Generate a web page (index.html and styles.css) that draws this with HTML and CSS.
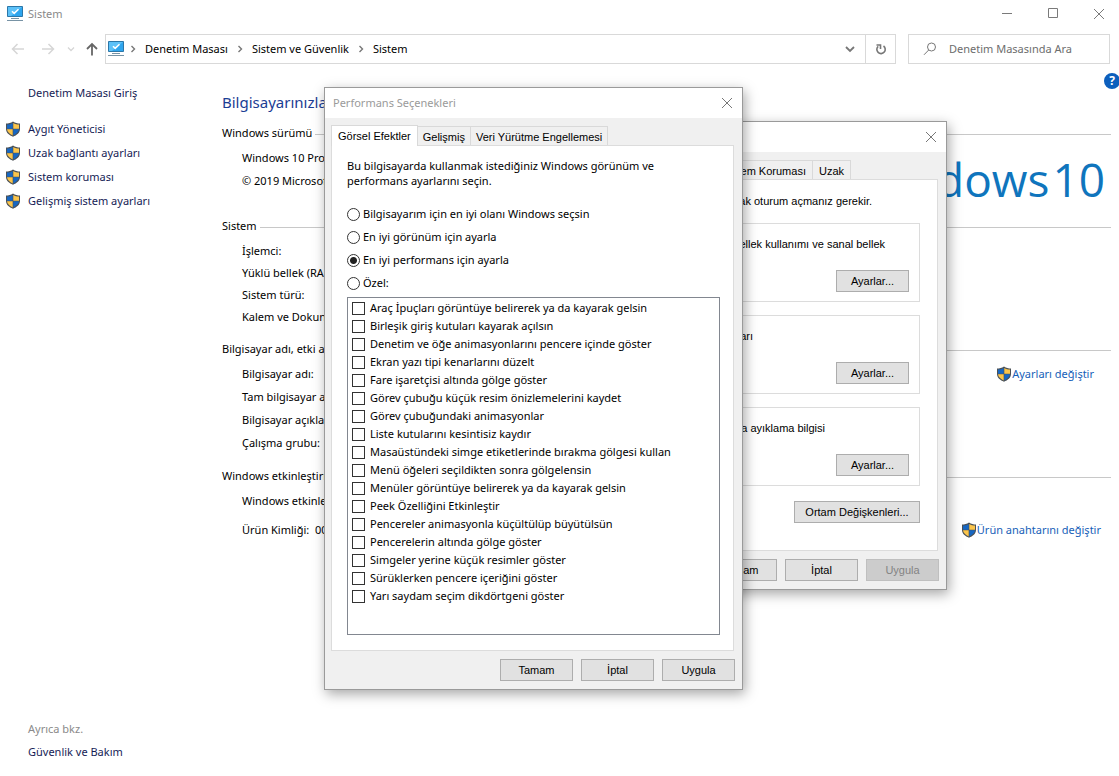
FILE: index.html
```html
<!DOCTYPE html>
<html lang="tr">
<head>
<meta charset="utf-8">
<title>Sistem</title>
<link rel="stylesheet" href="styles.css">
</head>
<body>
<svg class="defs" aria-hidden="true">
  <symbol id="shield" viewBox="0 0 16 16">
    <path d="M8 .4C5.800 2 3.400 2.400 1 2.400V8c0 3.700 3.200 6.300 7 7.700 3.800-1.400 7-4 7-7.700V2.400C12.600 2.400 10.200 2 8 .4z" fill="#4b5156"/>
    <path d="M7.700 2C6 3 4 3.500 2 3.500v4.300h5.700z" fill="#1767c2"/>
    <path d="M8.300 2C10 3 12 3.500 14 3.500v4.300H8.300z" fill="#fbc54b"/>
    <path d="M2 8.300h5.700v6.100C4.700 13 2.200 11.200 2 8.300z" fill="#fbc54b"/>
    <path d="M14 8.300H8.300v6.100C11.300 13 13.800 11.200 14 8.300z" fill="#1767c2"/>
  </symbol>
  <symbol id="computer" viewBox="0 0 16 16">
    <path d="M.5 .5h15v10H.5z" fill="#2ea5ee" stroke="#2c77a8"/>
    <path d="M1 1h14L4 10H1z" fill="#5cc1f8"/>
    <path d="M5 5.200l2.200 2.200L11.500 3.200" fill="none" stroke="#fff" stroke-width="1.500"/>
    <path d="M4 12.500h8M0 14.500h16" stroke="#7893a5" fill="none"/>
  </symbol>
  <symbol id="close" viewBox="0 0 12 12">
    <path d="M1 1l10 10M11 1L1 11" stroke="currentColor" fill="none"/>
  </symbol>
  <symbol id="chevron" viewBox="0 0 6 8">
    <path d="M1.500 1l3 3-3 3" stroke="currentColor" stroke-width="1.400" fill="none"/>
  </symbol>
</svg>

<div class="window">
  <header class="titlebar">
    <svg class="icon16"><use href="#computer"/></svg>
    <span class="titlebar-text">Sistem</span>
    <div class="caption-buttons">
      <button type="button" aria-label="Simge durumuna küçült"><svg viewBox="0 0 12 12"><path d="M1 5.500h10" stroke="currentColor"/></svg></button>
      <button type="button" aria-label="Ekranı kapla"><svg viewBox="0 0 12 12"><path d="M1.500 .5h9v9h-9z" stroke="currentColor" fill="none"/></svg></button>
      <button type="button" aria-label="Kapat"><svg><use href="#close"/></svg></button>
    </div>
  </header>

  <div class="navbar">
    <div class="nav-buttons">
      <button type="button" class="off" aria-label="Geri"><svg viewBox="0 0 14 14"><path d="M13 7H1.500M6.500 2L1.500 7l5 5" stroke="currentColor" stroke-width="1.500" fill="none"/></svg></button>
      <button type="button" class="off" aria-label="İleri"><svg viewBox="0 0 14 14"><path d="M1 7h11.500M7.500 2l5 5-5 5" stroke="currentColor" stroke-width="1.500" fill="none"/></svg></button>
      <button type="button" class="off small" aria-label="Son konumlar"><svg viewBox="0 0 8 8"><path d="M1 2.500l3 3 3-3" stroke="currentColor" stroke-width="1.300" fill="none"/></svg></button>
      <button type="button" aria-label="Yukarı"><svg viewBox="0 0 14 14"><path d="M7 13.500V2M2 7l5-5 5 5" stroke="currentColor" stroke-width="1.800" fill="none"/></svg></button>
    </div>
    <nav class="address">
      <svg class="icon16"><use href="#computer"/></svg>
      <svg class="chev"><use href="#chevron"/></svg>
      <a href="#">Denetim Masası</a>
      <svg class="chev"><use href="#chevron"/></svg>
      <a href="#">Sistem ve Güvenlik</a>
      <svg class="chev"><use href="#chevron"/></svg>
      <a href="#">Sistem</a>
      <button type="button" class="drop" aria-label="Önceki konumlar"><svg viewBox="0 0 10 10"><path d="M1 3l4 4 4-4" stroke="currentColor" stroke-width="1.800" fill="none"/></svg></button>
      <button type="button" class="refresh" aria-label="Yenile"><svg viewBox="0 0 12 12"><path d="M8.500 3A4.200 4.200 0 1 1 3.200 3.300" stroke="currentColor" stroke-width="1.600" fill="none"/><path d="M1.500 2h4v4" stroke="currentColor" stroke-width="1.600" fill="none"/></svg></button>
    </nav>
    <div class="search">
      <svg viewBox="0 0 14 14"><circle cx="8.500" cy="5" r="4" stroke="currentColor" fill="none"/><path d="M5.700 8L1 12.800" stroke="currentColor"/></svg>
      <input type="text" aria-label="Denetim Masasında Ara" placeholder="Denetim Masasında Ara">
    </div>
  </div>

  <div class="content">
    <aside class="sidebar">
      <a class="home" href="#">Denetim Masası Giriş</a>
      <ul class="tasks">
        <li><svg class="icon16"><use href="#shield"/></svg><a href="#">Aygıt Yöneticisi</a></li>
        <li><svg class="icon16"><use href="#shield"/></svg><a href="#">Uzak bağlantı ayarları</a></li>
        <li><svg class="icon16"><use href="#shield"/></svg><a href="#">Sistem koruması</a></li>
        <li><svg class="icon16"><use href="#shield"/></svg><a href="#">Gelişmiş sistem ayarları</a></li>
      </ul>
      <div class="see-also">
        <span>Ayrıca bkz.</span>
        <a href="#">Güvenlik ve Bakım</a>
      </div>
    </aside>

    <main class="main">
      <div class="main-head">
        <h1>Bilgisayarınızla</h1>
        <button type="button" class="help" aria-label="Yardım">?</button>
      </div>

      <section class="section edition">
        <h2>Windows sürümü</h2>
        <div class="section-body">
          <div class="rows"><p>Windows 10 Pro</p><p>© 2019 Microsoft</p></div>
          <div class="brand"><span>Windows</span><span>10</span></div>
        </div>
      </section>

      <section class="section system">
        <h2>Sistem</h2>
        <div class="rows"><p>İşlemci:</p><p>Yüklü bellek (RAM):</p><p>Sistem türü:</p><p>Kalem ve Dokunma:</p></div>
      </section>

      <section class="section naming">
        <h2>Bilgisayar adı, etki alanı</h2>
        <div class="section-body">
          <div class="rows"><p>Bilgisayar adı:</p><p>Tam bilgisayar adı:</p><p>Bilgisayar açıklaması:</p><p>Çalışma grubu:</p></div>
          <div class="action"><svg class="icon16"><use href="#shield"/></svg><a href="#">Ayarları değiştir</a></div>
        </div>
      </section>

      <section class="section activation">
        <h2>Windows etkinleştirme</h2>
        <div class="section-body">
          <div class="rows"><p>Windows etkinleştirildi</p><p>Ürün Kimliği: &nbsp;00</p></div>
          <div class="action"><svg class="icon16"><use href="#shield"/></svg><a href="#">Ürün anahtarını değiştir</a></div>
        </div>
      </section>
    </main>
  </div>
</div>

<div class="dialog properties" role="dialog" aria-label="Sistem">
  <div class="dialog-title">
    <button type="button" class="dialog-close" aria-label="Kapat"><svg><use href="#close"/></svg></button>
  </div>
  <div class="tabs">
    <button type="button" class="tab">Sistem Koruması</button>
    <button type="button" class="tab">Uzak</button>
  </div>
  <div class="panel">
    <p class="note">olarak oturum açmanız gerekir.</p>
    <div class="group"><p>bellek kullanımı ve sanal bellek</p><button type="button" class="btn">Ayarlar...</button></div>
    <div class="group profiles"><p>ayarları</p><button type="button" class="btn">Ayarlar...</button></div>
    <div class="group startup"><p>hata ayıklama bilgisi</p><button type="button" class="btn">Ayarlar...</button></div>
    <button type="button" class="btn env">Ortam Değişkenleri...</button>
  </div>
  <div class="dialog-actions">
    <button type="button" class="btn">Tamam</button>
    <button type="button" class="btn">İptal</button>
    <button type="button" class="btn" disabled>Uygula</button>
  </div>
</div>

<div class="dialog performance" role="dialog" aria-labelledby="perf-title">
  <div class="dialog-title">
    <span id="perf-title">Performans Seçenekleri</span>
    <button type="button" class="dialog-close" aria-label="Kapat"><svg><use href="#close"/></svg></button>
  </div>
  <div class="tabs">
    <button type="button" class="tab active">Görsel Efektler</button>
    <button type="button" class="tab">Gelişmiş</button>
    <button type="button" class="tab">Veri Yürütme Engellemesi</button>
  </div>
  <div class="panel">
    <p class="intro">Bu bilgisayarda kullanmak istediğiniz Windows görünüm ve performans ayarlarını seçin.</p>
    <div class="radios">
      <label><input type="radio" name="mode">Bilgisayarım için en iyi olanı Windows seçsin</label>
      <label><input type="radio" name="mode">En iyi görünüm için ayarla</label>
      <label><input type="radio" name="mode" checked>En iyi performans için ayarla</label>
      <label><input type="radio" name="mode">Özel:</label>
    </div>
    <div class="effects">
      <label><input type="checkbox">Araç İpuçları görüntüye belirerek ya da kayarak gelsin</label>
      <label><input type="checkbox">Birleşik giriş kutuları kayarak açılsın</label>
      <label><input type="checkbox">Denetim ve öğe animasyonlarını pencere içinde göster</label>
      <label><input type="checkbox">Ekran yazı tipi kenarlarını düzelt</label>
      <label><input type="checkbox">Fare işaretçisi altında gölge göster</label>
      <label><input type="checkbox">Görev çubuğu küçük resim önizlemelerini kaydet</label>
      <label><input type="checkbox">Görev çubuğundaki animasyonlar</label>
      <label><input type="checkbox">Liste kutularını kesintisiz kaydır</label>
      <label><input type="checkbox">Masaüstündeki simge etiketlerinde bırakma gölgesi kullan</label>
      <label><input type="checkbox">Menü öğeleri seçildikten sonra gölgelensin</label>
      <label><input type="checkbox">Menüler görüntüye belirerek ya da kayarak gelsin</label>
      <label><input type="checkbox">Peek Özelliğini Etkinleştir</label>
      <label><input type="checkbox">Pencereler animasyonla küçültülüp büyütülsün</label>
      <label><input type="checkbox">Pencerelerin altında gölge göster</label>
      <label><input type="checkbox">Simgeler yerine küçük resimler göster</label>
      <label><input type="checkbox">Sürüklerken pencere içeriğini göster</label>
      <label><input type="checkbox">Yarı saydam seçim dikdörtgeni göster</label>
    </div>
  </div>
  <div class="dialog-actions">
    <button type="button" class="btn">Tamam</button>
    <button type="button" class="btn">İptal</button>
    <button type="button" class="btn">Uygula</button>
  </div>
</div>
</body>
</html>
```

FILE: styles.css
```css
* { box-sizing: border-box; }
body {
  margin: 0;
  background: #fff;
  color: #000;
  font: 11px/16px "Noto Sans", "Open Sans", sans-serif;
  overflow: hidden;
}
p, h1, h2, ul { margin: 0; padding: 0; font-weight: 400; }
ul { list-style: none; }
a { text-decoration: none; color: inherit; white-space: nowrap; }
svg { display: block; flex: none; }
button { font: inherit; color: inherit; background: none; border: 0; padding: 0; }
.defs { position: absolute; width: 0; height: 0; }
.icon16 { width: 16px; height: 16px; }

.window { display: flex; flex-direction: column; min-height: 100vh; }
.titlebar { display: flex; align-items: center; height: 28px; padding: 0 14px 0 7px; gap: 5px; color: #8a8a8a; }
.caption-buttons { display: flex; gap: 34px; margin-left: auto; }
.caption-buttons svg, .dialog-close svg { width: 12px; height: 12px; }
.caption-buttons { color: #7a7a7a; }

.navbar { display: flex; align-items: center; height: 42px; padding: 0 9px 0 11px; }
.nav-buttons { display: flex; align-items: center; width: 94px; gap: 16px; color: #666; }
.nav-buttons svg { width: 14px; height: 14px; }
.nav-buttons .off { color: #d6d6d6; }
.nav-buttons .small { margin: 0 -6px 0 -4px; }
.nav-buttons .small svg { width: 8px; height: 8px; }
.address { flex: 1; display: flex; align-items: center; height: 30px; border: 1px solid #d9d9d9; padding-left: 2px; }
.chev { width: 6px; height: 8px; margin: 0 9px 0 6px; color: #777; }
.address a + .chev { margin: 0 9px; }
.drop { margin-left: auto; padding: 0 10px; color: #777; }
.drop svg { width: 10px; height: 10px; }
.refresh { display: grid; place-items: center; width: 30px; height: 28px; border-left: 1px solid #d9d9d9; color: #777; }
.refresh svg { width: 12px; height: 12px; }
.search { display: flex; align-items: center; gap: 12px; width: 202px; height: 30px; margin-left: 12px; border: 1px solid #d9d9d9; padding: 0 14px; color: #777; }
.search svg { width: 14px; height: 14px; }
.search input { flex: 1; min-width: 0; border: 0; padding: 0; outline: 0; font: inherit; }
.search input::placeholder { color: #6d6d6d; opacity: 1; }

.content { flex: 1; display: flex; }
.sidebar { width: 222px; display: flex; flex-direction: column; color: #151c55; padding: 15px 0 16px 5px; }
.home { padding-left: 23px; }
.tasks { margin-top: 16px; }
.tasks li { display: flex; align-items: center; gap: 7px; height: 24px; }
.see-also { margin-top: auto; padding-left: 23px; display: grid; gap: 7px; }
.see-also span { color: #8a8a8a; }

.main { flex: 1; padding-right: 8px; }
.main-head { display: flex; height: 54px; padding-top: 20px; justify-content: space-between; }
.main-head h1 { font-size: 15px; line-height: 24px; color: #1b3d94; }
.help { width: 16px; height: 16px; margin: -17px -9px 0 0; border-radius: 50%; background: #0c5fbd; color: #fff; font-weight: 700; font-size: 12px; line-height: 16px; }
.section h2 { display: flex; align-items: center; gap: 3px; font-size: 11px; height: 18px; line-height: 18px; white-space: nowrap; }
.section h2::after { content: ""; flex: 1; height: 1px; background: #c8c8c8; margin-top: 3px; }
.section .rows { padding: 4px 0 0 20px; line-height: 23px; }
.section-body { display: flex; justify-content: space-between; }
.edition { height: 93px; }
.brand { display: flex; gap: 3px; padding: 7px 6px 0 0; font: 400 46px/60px "Open Sans", sans-serif; color: #0f75bd; }
.system { height: 123px; }
.system .rows { padding-top: 5px; line-height: 22px; }
.naming { height: 127px; }
.activation .rows { padding-top: 1px; line-height: 29px; }
.action { display: flex; align-items: center; height: 23px; margin: 4px 17px 0 0; color: #1660b8; }
.activation .action { margin: 33px 10px 0 0; }

.dialog { position: absolute; display: flex; flex-direction: column; background: #f0f0f0; border: 1px solid #9a9a9a; box-shadow: 2px 4px 12px rgba(0, 0, 0, .35); }
.dialog-title { display: flex; align-items: center; height: 30px; padding: 0 9px 0 8px; background: #fff; color: #9a9a9a; }
.dialog-close { margin-left: auto; color: #777; }
.tabs { display: flex; align-items: flex-end; height: 27px; padding: 0 6px; font-family: "Liberation Sans", sans-serif; }
.tab { height: 19px; border: 1px solid #d9d9d9; border-bottom: 0; padding: 1px 5px 0; white-space: nowrap; }
.tab + .tab { border-left: 0; }
.tab.active { position: relative; height: 21px; margin-bottom: -1px; background: #fff; padding: 0 6px; }
.panel { flex: 1; background: #fff; border: 1px solid #dcdcdc; margin: 0 8px 0 6px; }
.dialog-actions { display: flex; justify-content: flex-end; gap: 8px; padding: 8px 7px; }
.btn { width: 73px; height: 22px; border: 1px solid #adadad; background: #e1e1e1; font-family: "Liberation Sans", sans-serif; line-height: 20px; white-space: nowrap; }
.btn:disabled { background: #ccc; border-color: #bfbfbf; color: #838383; }

.performance { left: 324px; top: 87px; width: 419px; }
.performance .panel { padding: 12px 13px 15px 15px; }
.intro { line-height: 15px; padding-right: 32px; }
.radios { display: grid; gap: 1px; margin-top: 15px; padding-bottom: 3px; }
.radios label { display: flex; align-items: center; gap: 3px; height: 22px; }
.radios input, .effects input { appearance: none; width: 13px; height: 13px; margin: 0; border: 1px solid #333; background: #fff; flex: none; }
.radios input { border-radius: 50%; }
.radios input:checked { background: radial-gradient(circle, #222 3px, #fff 4px); }
.effects { border: 1px solid #828790; padding: 1px 4px 29px; }
.effects label { display: flex; align-items: center; gap: 5px; height: 18px; white-space: nowrap; }

.properties { left: 534px; top: 121px; width: 413px; font-family: "Liberation Sans", sans-serif; }
.properties .tabs { justify-content: flex-end; padding-right: 95px; }
.properties .tab { padding: 1px 6px 0; }
.properties .panel { padding: 13px 17px 27px; text-align: right; }
.note { padding-right: 48px; }
.group { display: flex; flex-direction: column; justify-content: space-between; align-items: flex-end; height: 79px; margin-top: 14px; padding: 12px 10px 9px; border: 1px solid #dcdcdc; }
.group + .group { margin-top: 13px; }
.group p { padding-right: 24px; }
.group.profiles p { padding-right: 156px; }
.group.startup p { padding-right: 84px; }
.btn.env { width: 126px; margin-top: 15px; }
```
